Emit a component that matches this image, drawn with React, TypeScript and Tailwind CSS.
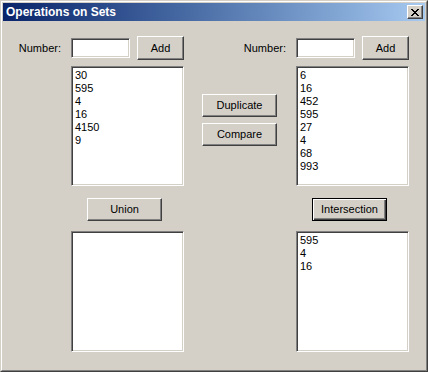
import * as React from "react"

const font = { fontFamily: '"Liberation Sans", Arial, sans-serif' }

const raised =
  "border border-t-white border-l-white border-r-[#404040] border-b-[#404040] shadow-[inset_-1px_-1px_0_#808080] bg-[#d4d0c8]"
const sunken =
  "border border-t-[#808080] border-l-[#808080] border-r-white border-b-white shadow-[inset_1px_1px_0_#404040,inset_-1px_-1px_0_#d4d0c8] bg-white"

function Button({ label, isDefault = false, className = "" }: { label: string; isDefault?: boolean; className?: string }) {
  if (isDefault) {
    return (
      <div className={`border border-black bg-[#d4d0c8] ${className}`}>
        <div className="w-full h-full flex items-center justify-center shadow-[inset_1px_1px_0_#fff,inset_-1px_-1px_0_#404040,inset_-2px_-2px_0_#808080] text-[11px] text-black">
          {label}
        </div>
      </div>
    )
  }
  return (
    <div className={`${raised} flex items-center justify-center text-[11px] text-black ${className}`}>
      {label}
    </div>
  )
}

function ListBox({ items, className = "" }: { items: string[]; className?: string }) {
  return (
    <div className={`${sunken} w-[113px] p-[2px] pl-[3px] ${className}`}>
      {items.map((item, i) => (
        <div key={i} className="text-[11px] leading-[13px] text-black">
          {item}
        </div>
      ))}
    </div>
  )
}

function NumberRow() {
  return (
    <>
      <div className="w-[46px] text-right text-[11px] text-black whitespace-nowrap">Number:</div>
      <div className={`${sunken} ml-[10px] w-[59px] h-[20px]`} />
      <Button label="Add" className="ml-[7px] w-[47px] h-[24px]" />
    </>
  )
}

export default function App() {
  return (
    <div style={font} className="w-[428px] h-[372px] border border-t-[#d4d0c8] border-l-[#d4d0c8] border-r-[#404040] border-b-[#404040] bg-[#d4d0c8]">
      <div className="w-full h-full border border-t-white border-l-white border-r-[#808080] border-b-[#808080] p-px flex flex-col">
        {/* Title bar */}
        <div className="h-[18px] flex items-center justify-between pl-[3px] pr-[2px] bg-gradient-to-r from-[#0a246a] to-[#a6caf0]">
          <span className="text-white font-bold text-[12px] leading-none">Operations on Sets</span>
          <div className={`${raised} w-[16px] h-[14px] flex items-center justify-center`}>
            <svg width="8" height="7" viewBox="0 0 8 7" shapeRendering="crispEdges">
              <path d="M0 0h2v1h-2zM6 0h2v1h-2zM1 1h2v1h-2zM5 1h2v1h-2zM2 2h4v1h-4zM3 3h2v1h-2zM2 4h4v1h-4zM1 5h2v1h-2zM5 5h2v1h-2zM0 6h2v1h-2zM6 6h2v1h-2z" fill="#000" />
            </svg>
          </div>
        </div>

        {/* Content */}
        <div className="flex-1 pt-[15px] pl-[12px] flex flex-col">
          <div className="flex items-center h-[24px]">
            <NumberRow />
            <div className="ml-[56px] flex items-center">
              <NumberRow />
            </div>
          </div>

          <div className="flex mt-[6px]">
            <ListBox items={["30", "595", "4", "16", "4150", "9"]} className="ml-[56px] h-[120px]" />
            <div className="ml-[18px] pt-[28px] flex flex-col gap-[6px]">
              <Button label="Duplicate" className="w-[75px] h-[23px]" />
              <Button label="Compare" className="w-[75px] h-[23px]" />
            </div>
            <ListBox items={["6", "16", "452", "595", "27", "4", "68", "993"]} className="ml-[19px] h-[120px]" />
          </div>

          <div className="flex mt-[12px]">
            <Button label="Union" className="ml-[72px] w-[75px] h-[23px]" />
            <Button label="Intersection" isDefault className="ml-[150px] w-[75px] h-[23px]" />
          </div>

          <div className="flex mt-[10px]">
            <ListBox items={[]} className="ml-[56px] h-[121px]" />
            <ListBox items={["595", "4", "16"]} className="ml-[112px] h-[121px]" />
          </div>
        </div>
      </div>
    </div>
  )
}
